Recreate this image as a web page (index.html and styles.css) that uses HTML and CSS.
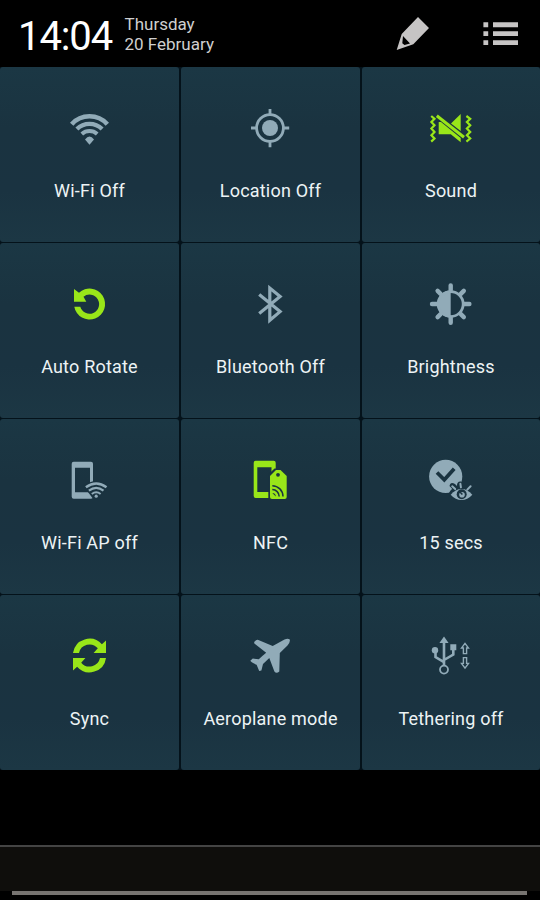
FILE: index.html
```html
<!DOCTYPE html>
<html lang="en">
<head>
<meta charset="utf-8">
<title>Quick settings</title>
<link rel="stylesheet" href="styles.css">
</head>
<body>
<div class="screen">
  <header class="header">
    <div class="time">14:04</div>
    <div class="date"><div>Thursday</div><div>20 February</div></div>
    <div class="actions">
      <svg class="pencil" viewBox="0 0 50 50"><path fill-rule="evenodd" d="M28 7L39 18 23.3 34.3 6.7 40 11.7 24ZM13 26L12.3 33.2 14.5 35 20 33.5Z"/></svg>
      <svg class="list" viewBox="0 0 36 24"><path d="M.4 .3h4.8v4.9H.4zM10 .3h25v4.9H10zM.4 9.3h4.8v4.8H.4zM10 9.3h25v4.8H10zM.4 18.2h4.8v4.9H.4zM10 18.2h25v4.9H10z"/></svg>
    </div>
  </header>
  <main class="grid">
    <div class="tile">
      <svg class="icon" viewBox="0 0 60 60"><g class="line"><path stroke-width="4.6" d="M11.7 26.2A24 24 0 0 1 47.3 26.2"/><path stroke-width="4.3" d="M16.9 31A18 18 0 0 1 42.1 31"/><path stroke-width="4" d="M21.8 36A11.5 11.5 0 0 1 37.2 36"/></g><path d="M25 41.6Q29.5 35.6 34 41.6L29.5 46.8Z"/></svg>
      <span class="label">Wi-Fi Off</span>
    </div>
    <div class="tile">
      <svg class="icon" viewBox="0 0 60 60"><circle cx="29" cy="30" r="8"/><g class="line" stroke-width="2.8"><circle cx="29" cy="30" r="13.4"/><path d="M29 11v6M29 43v6.2M10 30h6M42 30h6.2"/></g></svg>
      <span class="label">Location Off</span>
    </div>
    <div class="tile on">
      <svg class="icon" viewBox="0 0 60 60"><path d="M29 25.5L38.7 16V33ZM16.7 24H19L38.7 40V44.3L28.8 36.3H16.7Z"/><g class="line"><path stroke-width="3" d="M14.8 17.7L42 39.2"/><path stroke-width="2.2" d="M9.2 18l3.3 2.8-3.1 3.2 3.1 3.3-3.1 3.3 3.1 3.3-3.1 3.3 3.1 3.3-3.3 3.1M44.4 18l3.8 2.8-3.3 3.2 3.3 3.3-3.3 3.3 3.3 3.3-3.3 3.3 3.3 3.3-3.8 3.1"/></g></svg>
      <span class="label">Sound</span>
    </div>
    <div class="tile on">
      <svg class="icon" viewBox="0 2.67 60 60"><path d="M14 17.7L19 22 26.3 30.3H14ZM14 17.7L20 22.7 26.3 30.3ZM14.3 35.5H20.3A9.6 9.6 0 1 0 23.5 25.3L26.3 30.3H14V17.7L19 21.4A15.5 15.5 0 1 1 14.3 35.5Z"/></svg>
      <span class="label">Auto Rotate</span>
    </div>
    <div class="tile">
      <svg class="icon" viewBox="0 2.67 60 60"><path class="line" stroke-width="3.2" d="M18.2 23.2L39.1 40.3 28.8 49V16.8L39.1 25.2 18.2 42.2"/></svg>
      <span class="label">Bluetooth Off</span>
    </div>
    <div class="tile">
      <svg class="icon" viewBox="0 2.67 60 60"><path d="M28.7 19.2a13.5 13.5 0 0 0 0 27z"/><g class="line"><circle cx="28.7" cy="32.7" r="12.5" stroke-width="2.8"/><path stroke-width="4.4" stroke-linecap="round" d="M28.7 14v5M28.7 46.4v5M10 32.7h5M42.4 32.7h5M15.6 19.6l3 3M38.8 42.8l3 3M41.8 19.6l-3 3M18.6 42.8l-3 3"/></g></svg>
      <span class="label">Brightness</span>
    </div>
    <div class="tile">
      <svg class="icon" viewBox="0 0 60 60"><path fill-rule="evenodd" d="M13.7 11.7H31a2 2 0 0 1 2 2V46.7a2 2 0 0 1-2 2H13.7a2 2 0 0 1-2-2V13.7a2 2 0 0 1 2-2zM15 17.7V42.3H30V17.7z"/><path class="cut" d="M23.5 36.3Q36.3 25.5 49.6 36.3L37.5 50H34Z"/><g class="line"><path stroke-width="2.4" d="M25.9 37.3Q36.2 29.6 46.5 37.3"/><path stroke-width="2.2" d="M28.9 40.7Q36.2 35.2 43.5 40.7"/><path stroke-width="2" d="M31.8 44Q36.2 40.6 40.6 44"/></g><circle cx="36.2" cy="46.2" r="1.6"/></svg>
      <span class="label">Wi-Fi AP off</span>
    </div>
    <div class="tile on">
      <svg class="icon" viewBox="0 0 60 60"><path fill-rule="evenodd" d="M14.7 10.7H32.7a2 2 0 0 1 2 2V48H14.7a2 2 0 0 1-2-2V12.7a2 2 0 0 1 2-2zM16.3 17.3V42H30.5V17.3z"/><path class="cut" d="M27.3 50V24.5L33.5 18.5H40V50z"/><path d="M35 20h4.5L45.7 26V47a2 2 0 0 1-2 2H31a2 2 0 0 1-2-2V26z"/><circle class="cut" cx="37" cy="24.8" r="1.9"/><g class="line dark" stroke-width="1.5"><path d="M31.3 35.7A10.8 10.8 0 0 1 42 46.5M31.3 39.6A7 7 0 0 1 38.2 46.5"/></g><path class="cut" d="M31.3 43A3.5 3.5 0 0 1 34.8 46.5z"/></svg>
      <span class="label">NFC</span>
    </div>
    <div class="tile">
      <svg class="icon" viewBox="0 0 60 60"><circle cx="23.7" cy="26.4" r="16.6"/><path class="line dark" stroke-width="3.7" d="M15 22.5L22.3 29.8 32.2 18.8"/><path class="cut" d="M26.5 44.7Q28 40 30.3 39L27.5 36Q28.5 31 33 34L35 36Q34.8 31 39 31.5L42 38V50H32z"/><path d="M28.7 44.7Q33.5 39 39.5 39T50.3 44.7Q45.5 50.1 39.5 50.1T28.7 44.7Z"/><circle class="cut" cx="39.7" cy="44.2" r="5"/><circle cx="40" cy="44.7" r="2.8"/><path class="line dark" stroke-width="1.5" d="M37 41l3.4 3.6"/><path class="line" stroke-width="2" stroke-linecap="round" d="M30.2 36.3L33.2 39M38.4 33.8l.5 3.5M48.6 36.3L45.3 39.6"/></svg>
      <span class="label">15 secs</span>
    </div>
    <div class="tile on">
      <svg class="icon" viewBox="0 0 60 60"><path d="M13 27A16.6 16.6 0 0 1 41.9 18.3L46 14.6V27H33.6L37.8 22.3A10.8 10.8 0 0 0 19 27Z"/><path transform="rotate(180 29.5 29.5)" d="M13 27A16.6 16.6 0 0 1 41.9 18.3L46 14.6V27H33.6L37.8 22.3A10.8 10.8 0 0 0 19 27Z"/></svg>
      <span class="label">Sync</span>
    </div>
    <div class="tile">
      <svg class="icon" viewBox="0 0 60 60"><path d="M48.6 13.2Q46.5 12.4 43.5 13.4L31.7 20 16.8 13.8Q15.3 13.6 13.2 16 13 17.3 14 18L25.2 26.7Q21 30 17.8 33.3L11.8 32.6 9.3 34.7Q9.5 35.7 15.6 38.8L18.2 45 20.4 44.6 22 38 28.3 32 33.4 45.5Q35.4 48 38.3 45.5L38.8 27 46.5 19.5Q49.8 15.5 48.6 13.2Z"/></svg>
      <span class="label">Aeroplane mode</span>
    </div>
    <div class="tile">
      <svg class="icon" viewBox="0 0 60 60"><path d="M22 10.5L26.6 17H17.4ZM28.3 18.3h6v6h-6z"/><circle cx="13" cy="24.3" r="3.2"/><g class="line"><path stroke-width="2.6" d="M22 16V39.5M13.5 25v6L22 36.2M31.3 24v4.6L22 34"/><circle cx="22" cy="43.6" r="4" stroke-width="1.8"/><path stroke-width="1.4" d="M43 17.3L46.5 22H44.6V27.6H41.4V22H39.5ZM43 42.1L39.5 37.4H41.4V31.6H44.6V37.4H46.5Z"/></g></svg>
      <span class="label">Tethering off</span>
    </div>
  </main>
  <footer class="footer"><div class="handle"></div></footer>
</div>
</body>
</html>
```
FILE: styles.css
```css
* { box-sizing: border-box; }
body { margin: 0; background: #000; font-family: Roboto, sans-serif; }
.screen { width: 540px; height: 900px; display: flex; flex-direction: column; background: #000; overflow: hidden; }
.header { height: 67px; flex: none; display: flex; padding-left: 18px; }
.time { width: 106.5px; padding-top: 13px; font-size: 40px; line-height: 47px; letter-spacing: -1.1px; color: #fff; }
.date { padding-top: 14px; font-size: 17px; line-height: 20px; color: #cfcfcf; white-space: nowrap; }
.actions { margin-left: auto; display: flex; padding-right: 21px; fill: #c6c4c4; }
.pencil { width: 50px; height: 50px; margin: 10px 43px 0 0; }
.list { width: 36px; height: 24px; margin-top: 22px; }
.grid { flex: none; display: grid; grid-template-columns: 179px 179px 178px; grid-auto-rows: 175px; gap: 1px 2px; background: #04121a; height: 703px; }
.tile { border-radius: 3px; background: linear-gradient(#1b3744, #1a3340 35%, #1a3341 70%, #1c3744); display: flex; flex-direction: column; align-items: center; }
.icon { width: 60px; height: 60px; margin: 31px 0 0 60px; align-self: flex-start; flex: none; fill: #91abb8; stroke: none; color: #91abb8; }
.on .icon { fill: #99e619; color: #99e619; }
.icon .line { fill: none; stroke: currentColor; }
.icon .cut { fill: #1a3340; }
.icon .dark { stroke: #1a3340; }
.label { margin-top: 22px; font-size: 18px; line-height: 22px; letter-spacing: 0.2px; color: #edf3f5; white-space: nowrap; }
.footer { height: 55px; margin-top: auto; border-top: 2px solid #444; background: linear-gradient(#0f0e0c 44px, #000 44px); display: flex; flex-direction: column; padding: 44px 13px 0 12px; }
.handle { height: 4px; background: #777471; }
```
